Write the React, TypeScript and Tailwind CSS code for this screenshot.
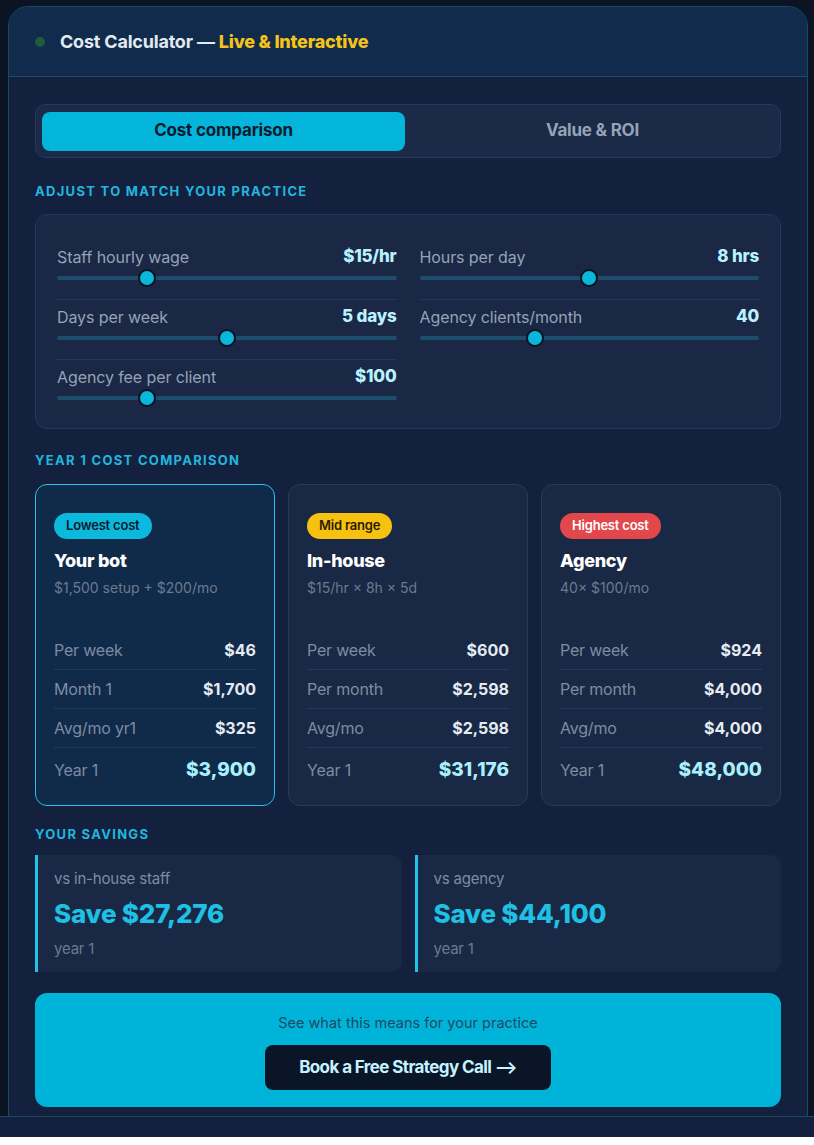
import React from "react";

type SliderProps = { label: string; value: string; pct: number; divider?: boolean };

function Slider({ label, value, pct, divider }: SliderProps) {
  return (
    <div className={`pt-[6px] pb-[11px] ${divider ? "border-b border-[#24395a]" : ""}`}>
      <div className="flex items-center justify-between h-[22px]">
        <span className="text-[16px] text-[#94a3b8] tracking-[-0.1px]">{label}</span>
        <span className="text-[17px] font-extrabold text-[#b9f2ff] tracking-[-0.2px]">{value}</span>
      </div>
      <div className="relative h-[20px] flex items-center">
        <div className="h-[4px] w-full rounded-full bg-[#1c4d6c]" />
        <div
          className="absolute top-1/2 h-[18px] w-[18px] -translate-x-1/2 -translate-y-1/2 rounded-full border-2 border-[#08131f] bg-[#0ab7db]"
          style={{ left: `${pct}%` }}
        />
      </div>
    </div>
  );
}

type Row = { label: string; value: string };

type CostCardProps = {
  badge: string;
  badgeClass: string;
  title: string;
  sub: string;
  rows: Row[];
  total: string;
  highlight?: boolean;
};

function CostCard({ badge, badgeClass, title, sub, rows, total, highlight }: CostCardProps) {
  return (
    <div
      className={`rounded-[12px] border px-[18px] pt-[27px] pb-[13px] ${
        highlight ? "border-[#27c3e6] bg-[#102a49]" : "border-[#2a3b58] bg-[#192844]"
      }`}
    >
      <span className={`inline-flex h-[26px] items-center rounded-full px-[12px] text-[13px] font-semibold tracking-[-0.2px] ${badgeClass}`}>
        {badge}
      </span>
      <div className="mt-[10px] text-[18px] font-extrabold tracking-[-0.3px] text-white leading-[24px]">{title}</div>
      <div className="mt-[5px] text-[14px] text-[#6b7a90] leading-[20px]">{sub}</div>
      <div className="mt-[33px]">
        {rows.map((r) => (
          <div key={r.label} className="flex items-center justify-between h-[39px] border-b border-[#26395a]">
            <span className="text-[16px] text-[#7d8ca3] tracking-[-0.2px]">{r.label}</span>
            <span className="text-[16px] font-bold text-[#e5ebf3]">{r.value}</span>
          </div>
        ))}
        <div className="flex items-center justify-between h-[44px]">
          <span className="text-[16px] text-[#7d8ca3] tracking-[-0.2px]">Year 1</span>
          <span className="text-[19px] font-extrabold text-[#a8f0fb]">{total}</span>
        </div>
      </div>
    </div>
  );
}

function Saving({ label, amount }: { label: string; amount: string }) {
  return (
    <div className="rounded-r-[10px] border-l-[3px] border-[#22c3e6] bg-[#192844] pl-[16px] pt-[14px] h-[117px]">
      <div className="text-[15px] text-[#7d8ca3] leading-[20px] tracking-[-0.2px]">{label}</div>
      <div className="mt-[9px] text-[26px] font-extrabold text-[#1ec0e4] leading-[32px] tracking-[-0.2px]">{amount}</div>
      <div className="mt-[9px] text-[15px] text-[#6b7a90] leading-[20px] tracking-[-0.2px]">year 1</div>
    </div>
  );
}

export default function App() {
  return (
    <div className="w-[814px] bg-white" style={{ fontFamily: "Inter, 'Noto Sans', sans-serif" }}>
      <div className="h-[1116px] overflow-hidden bg-[#0a1422] pt-[6px] pl-[8px] pr-[6px]">
        <div className="rounded-[20px] border border-[#1d4766] bg-[#13203e] overflow-hidden">
          {/* header */}
          <div className="flex h-[70px] items-center gap-[15px] border-b border-[#1f4a68] bg-[#102b4b] pl-[26px]">
            <span className="h-[10px] w-[10px] rounded-full bg-[#1f5a3e]" />
            <span className="text-[18px] font-bold tracking-[-0.2px] text-[#e3e9f1]">
              Cost Calculator —{" "}
              <span className="font-extrabold text-[#f6c419]">Live &amp; Interactive</span>
            </span>
          </div>

          <div className="px-[26px] pt-[27px] pb-[40px]">
            {/* tabs */}
            <div className="flex h-[54px] items-center gap-[6px] rounded-[10px] border border-[#233a5a] bg-[#1a2a47] p-[6px]">
              <div className="flex h-[39px] flex-1 items-center justify-center rounded-[8px] bg-[#03b5da] text-[17px] font-bold text-[#0b1a2e] tracking-[-0.2px]">
                Cost comparison
              </div>
              <div className="flex h-[39px] flex-1 items-center justify-center text-[17px] font-bold text-[#95a3b8] tracking-[-0.2px]">
                Value &amp; ROI
              </div>
            </div>

            <div className="mt-[24px] text-[13px] font-bold tracking-[1.3px] text-[#22b6df]">
              ADJUST TO MATCH YOUR PRACTICE
            </div>

            {/* sliders */}
            <div className="mt-[12px] grid grid-cols-2 gap-x-[23px] rounded-[12px] border border-[#23385a] bg-[#1a2845] px-[21px] pt-[25px] pb-[9px]">
              <div>
                <Slider label="Staff hourly wage" value="$15/hr" pct={26.5} divider />
                <Slider label="Days per week" value="5 days" pct={50} divider />
                <Slider label="Agency fee per client" value="$100" pct={26.5} />
              </div>
              <div>
                <Slider label="Hours per day" value="8 hrs" pct={50} divider />
                <Slider label="Agency clients/month" value="40" pct={34} />
              </div>
            </div>

            <div className="mt-[22px] text-[13px] font-bold tracking-[1.3px] text-[#22b6df]">
              YEAR 1 COST COMPARISON
            </div>

            {/* cost cards */}
            <div className="mt-[14px] grid grid-cols-3 gap-[13px]">
              <CostCard
                highlight
                badge="Lowest cost"
                badgeClass="bg-[#0bb9dc] text-[#0b1a2e]"
                title="Your bot"
                sub="$1,500 setup + $200/mo"
                rows={[
                  { label: "Per week", value: "$46" },
                  { label: "Month 1", value: "$1,700" },
                  { label: "Avg/mo yr1", value: "$325" },
                ]}
                total="$3,900"
              />
              <CostCard
                badge="Mid range"
                badgeClass="bg-[#f7c20f] text-[#2a1a05]"
                title="In-house"
                sub="$15/hr × 8h × 5d"
                rows={[
                  { label: "Per week", value: "$600" },
                  { label: "Per month", value: "$2,598" },
                  { label: "Avg/mo", value: "$2,598" },
                ]}
                total="$31,176"
              />
              <CostCard
                badge="Highest cost"
                badgeClass="bg-[#e2474b] text-white"
                title="Agency"
                sub="40× $100/mo"
                rows={[
                  { label: "Per week", value: "$924" },
                  { label: "Per month", value: "$4,000" },
                  { label: "Avg/mo", value: "$4,000" },
                ]}
                total="$48,000"
              />
            </div>

            <div className="mt-[19px] text-[13px] font-bold tracking-[1.3px] text-[#22b6df]">YOUR SAVINGS</div>

            {/* savings */}
            <div className="mt-[11px] grid grid-cols-2 gap-[13px]">
              <Saving label="vs in-house staff" amount="Save $27,276" />
              <Saving label="vs agency" amount="Save $44,100" />
            </div>

            {/* call to action */}
            <div className="mt-[21px] flex h-[114px] flex-col items-center rounded-[12px] bg-[#00b4d9] pt-[19px]">
              <div className="text-[14.5px] text-[#1d4a66]">See what this means for your practice</div>
              <div className="mt-[11px] flex h-[45px] w-[286px] items-center justify-center rounded-[8px] bg-[#0a1628] text-[17px] font-bold tracking-[-0.6px] text-[#c6f3ff]">
                Book a Free Strategy Call ⟶
              </div>
            </div>
          </div>
        </div>
      </div>
      <div className="h-[21px] border-t border-[#1f4560] bg-[#142040]" />
    </div>
  );
}
